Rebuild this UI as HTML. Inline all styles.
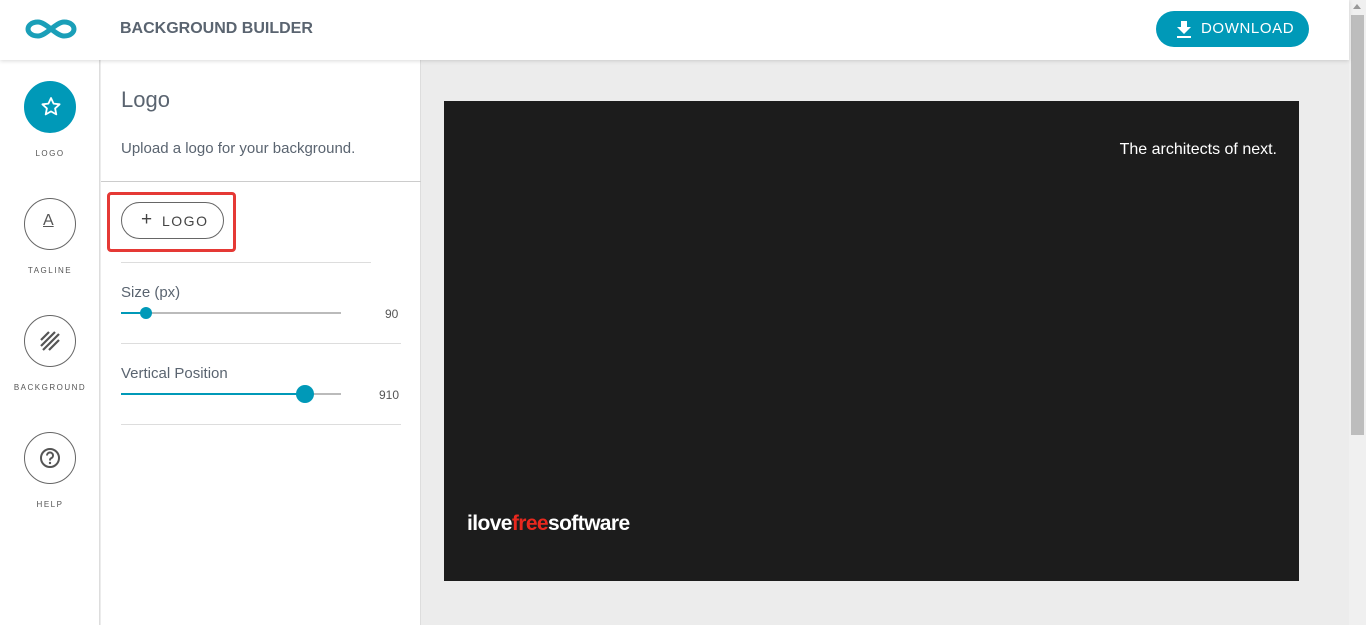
<!DOCTYPE html>
<html><head><meta charset="utf-8"><style>
*{margin:0;padding:0;box-sizing:border-box}
body{width:1366px;height:625px;overflow:hidden;background:#ececec;font-family:"Liberation Sans",sans-serif;position:relative;color:#5a6470}
.hdr{position:absolute;left:0;top:0;width:1349px;height:60px;background:#fff;box-shadow:0 1px 4px rgba(0,0,0,.15);z-index:2}
.title{position:absolute;left:120px;top:20px;font-size:16px;font-weight:bold;color:#5a6470}
.dl{position:absolute;left:1156px;top:11px;width:153px;height:36px;border-radius:18px;background:#0099b8;color:#fff;font-size:15px;letter-spacing:.6px}
.side{position:absolute;left:0;top:60px;width:100px;height:565px;background:#fff;border-right:1px solid #ddd}
.circ{position:absolute;left:24px;width:52px;height:52px;border-radius:50%;border:1px solid #666;background:#fff}
.lbl{position:absolute;width:100px;text-align:center;font-size:8px;letter-spacing:1.5px;color:#555}
.panel{position:absolute;left:101px;top:60px;width:320px;height:565px;background:#fff;border-right:1px solid #ddd}
.sb{position:absolute;left:1349px;top:0;width:17px;height:625px;background:#f0f0f0}
.thumb{position:absolute;left:1351px;top:15px;width:13px;height:420px;background:#bdbdbd}
.num{position:absolute;font-size:12px;color:#555}
.track{position:absolute;height:2px;background:#bbb}
</style></head><body>
<div class="hdr">
<svg style="position:absolute;left:24px;top:18px" width="54" height="22" viewBox="0 0 54 22"><path d="M14 4C7 4 4 8 4 11s3 7 10 7c8 0 18-14 26-14c7 0 10 4 10 7s-3 7-10 7C32 18 22 4 14 4z" fill="none" stroke="#1a9fb8" stroke-width="5"/></svg>
<div class="title">BACKGROUND BUILDER</div>
<div class="dl"><svg style="position:absolute;left:20px;top:10px" width="16" height="17" viewBox="0 0 16 17"><path d="M5 0h6v6h4l-7 7-7-7h4z M1 15h14v2H1z" fill="#fff"/></svg><span style="position:absolute;left:45px;top:9px">DOWNLOAD</span></div>
</div>
<div class="side">
<div class="circ" style="top:21px;background:#0099b8;border-color:#0099b8"><svg style="position:absolute;left:15px;top:14px" width="22" height="22" viewBox="0 0 22 22"><path d="M11 2l2.6 5.6 6 .7-4.5 4.1 1.2 6L11 15.4 5.7 18.4l1.2-6L2.4 8.3l6-.7z" fill="none" stroke="#fff" stroke-width="1.8" stroke-linejoin="round"/></svg></div>
<div class="lbl" style="top:89px">LOGO</div>
<div class="circ" style="top:138px"><span style="position:absolute;left:18px;top:13px;font-size:16px;color:#555;text-decoration:underline">A</span></div>
<div class="lbl" style="top:206px">TAGLINE</div>
<div class="circ" style="top:255px"><svg style="position:absolute;left:15px;top:15px" width="20" height="20" viewBox="0 0 20 20"><path d="M1 9L9 1M1 15L15 1M3 19L19 3M9 19l10-10" stroke="#555" stroke-width="2.2"/></svg></div>
<div class="lbl" style="top:323px">BACKGROUND</div>
<div class="circ" style="top:372px"><svg style="position:absolute;left:14px;top:14px" width="22" height="22" viewBox="0 0 22 22"><circle cx="11" cy="11" r="9" fill="none" stroke="#555" stroke-width="2"/><path d="M8 8.5a3 3 0 1 1 4 2.8c-1 .4-1 1-1 2.2" fill="none" stroke="#555" stroke-width="2"/><circle cx="11" cy="16" r="1.2" fill="#555"/></svg></div>
<div class="lbl" style="top:440px">HELP</div>
</div>
<div class="panel">
<div style="position:absolute;left:20px;top:27px;font-size:22px;color:#5a6470">Logo</div>
<div style="position:absolute;left:20px;top:80px;font-size:15px;color:#5a6470">Upload a logo for your background.</div>
<div style="position:absolute;left:0;top:121px;width:320px;height:1px;background:#ccc"></div>
<div style="position:absolute;left:6px;top:132px;width:129px;height:60px;border:3px solid #e53935;border-radius:4px"></div>
<div style="position:absolute;left:20px;top:142px;width:103px;height:37px;border:1px solid #666;border-radius:19px;font-size:14px;letter-spacing:1.5px;color:#444"><span style="position:absolute;left:19px;top:7px;font-size:19px;line-height:19px">+</span><span style="position:absolute;left:40px;top:10px">LOGO</span></div>
<div style="position:absolute;left:20px;top:202px;width:250px;height:1px;background:#ddd"></div>
<div style="position:absolute;left:20px;top:224px;font-size:15px">Size (px)</div>
<div class="track" style="left:20px;top:252px;width:220px"></div>
<div class="track" style="left:20px;top:252px;width:25px;background:#0099b8"></div>
<div style="position:absolute;left:39px;top:247px;width:12px;height:12px;border-radius:50%;background:#0099b8"></div>
<div class="num" style="left:284px;top:247px">90</div>
<div style="position:absolute;left:20px;top:283px;width:280px;height:1px;background:#ddd"></div>
<div style="position:absolute;left:20px;top:305px;font-size:15px">Vertical Position</div>
<div class="track" style="left:20px;top:333px;width:220px"></div>
<div class="track" style="left:20px;top:333px;width:184px;background:#0099b8"></div>
<div style="position:absolute;left:195px;top:325px;width:18px;height:18px;border-radius:50%;background:#0099b8"></div>
<div class="num" style="left:278px;top:328px">910</div>
<div style="position:absolute;left:20px;top:364px;width:280px;height:1px;background:#ddd"></div>
</div>
<div style="position:absolute;left:444px;top:101px;width:855px;height:480px;background:#1c1c1c">
<div style="position:absolute;right:22px;top:40px;color:#fff;font-size:16px">The architects of next.</div>
<div style="position:absolute;left:23px;top:411px;color:#fff;font-size:21px;font-weight:bold;letter-spacing:-.6px">ilove<span style="color:#e8281e">free</span>software</div>
</div>
<div class="sb"></div><div class="thumb"></div>
<div style="position:absolute;left:1353px;top:4px;width:0;height:0;border-left:4px solid transparent;border-right:4px solid transparent;border-bottom:5px solid #999"></div>
</body></html>
